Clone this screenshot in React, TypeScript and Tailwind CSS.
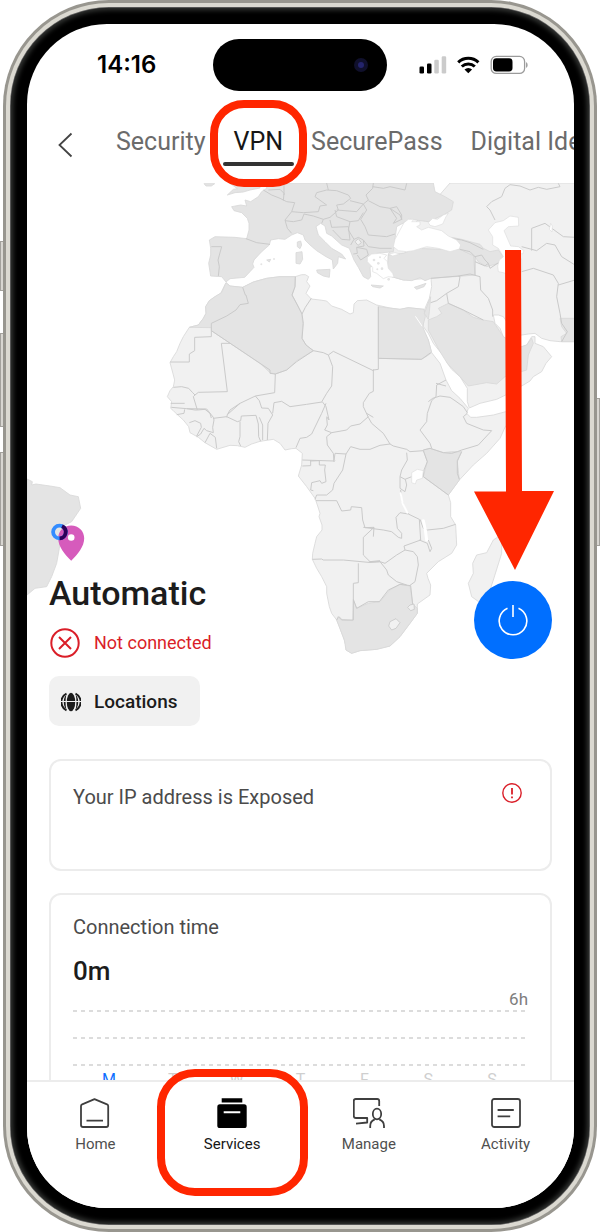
import React from "react";

const WORLD = {
  africa:
    "M228 308L240 318 278 322 310 306 350 295 390 290 436 290 455 284 466 284 476 290 470 305 480 318 468 340 484 357 510 360 530 363 545 378 575 388 600 402 610 398 612 372 622 362 650 360 680 375 720 384 750 388 775 383 822 388 826 410 820 440 815 440 806 425 795 408 815 440 835 480 845 518 870 550 888 600 905 632 930 655 955 685 950 700 962 712 980 712 1030 705 1067 695 1100 688 1092 710 1066 740 1050 775 1010 820 970 855 928 900 895 945 902 968 902 1010 917 1035 920 1095 905 1120 865 1145 830 1180 834 1195 842 1215 840 1245 802 1272 802 1300 780 1330 750 1370 720 1398 680 1408 655 1410 630 1412 605 1420 588 1410 587 1395 583 1380 570 1345 560 1320 545 1300 538 1280 530 1240 530 1220 515 1190 500 1165 487 1138 488 1120 495 1090 500 1070 516 1050 516 1035 507 1010 510 1000 502 975 495 955 470 920 445 888 455 855 457 820 438 805 425 806 405 810 390 790 370 778 330 784 305 792 285 802 262 797 240 796 200 808 165 788 145 772 120 758 116 740 100 720 80 702 70 692 62 685 65 665 52 650 60 632 70 620 74 600 66 570 60 548 70 530 80 515 90 490 100 470 118 442 145 435 160 415 168 400 167 380 178 362 195 350 212 340Z",
  asia:
    "M715 222L900 9 1275 9 1275 485 1230 485 1200 482 1175 475 1155 460 1135 462 1115 465 1095 465 1080 450 1070 425 1060 410 1045 405 1030 405 1035 430 1050 445 1060 470 1090 490 1115 500 1130 495 1145 470 1155 470 1155 490 1180 500 1205 530 1188 550 1175 575 1150 590 1140 603 1120 615 1067 645 1040 658 990 670 958 684 952 665 952 625 930 590 905 568 892 550 885 530 870 515 850 490 835 460 820 440 818 425 825 385 838 355 845 320 843 295 760 300 725 290 715 250Z",
  europe:
    "M350 9L850 9 855 35 885 50 910 65 905 90 880 105 835 125 780 118 740 140 730 215 680 220 672 235 680 265 668 258 660 262 662 290 655 298 640 290 625 262 612 240 598 205 575 195 545 168 530 160 525 138 512 130 498 140 505 165 525 185 545 205 575 222 587 237 565 230 563 250 550 267 547 240 528 230 500 212 480 195 465 180 460 165 442 158 425 165 405 178 385 176 362 180 358 195 335 215 312 240 308 252 312 262 300 275 284 292 240 296 228 306 215 290 182 288 176 250 182 225 182 205 178 180 195 170 255 172 290 176 297 150 297 130 292 115 275 98 252 92 245 80 272 75 290 78 285 60 302 65 325 50 335 35 350 25Z",
  turkey:
    "M715 225L760 220 800 205 870 208 930 208 970 225 975 285 940 288 843 295 825 302 810 293 785 302 760 300 725 290 712 265Z",
  caucasus:
    "M905 172L935 178 960 185 990 193 1000 205 1020 215 1045 210 1060 230 1045 250 1010 260 985 245 975 230 930 208Z",
};

const DARK = [
  "M228 308L240 318 278 322 310 306 350 295 390 290 436 290 435 320 426 345 440 370 455 400 458 430 456 475 468 495 490 512 440 542 410 570 375 582 360 578 330 550 184 452 184 443 118 442 145 435 160 415 168 400 167 380 178 362 195 350 215 338Z",
  "M685 380L750 388 775 383 822 388 826 410 818 440 835 480 845 518 828 530 812 538 685 535Z",
  "M842 350L838 395 835 418 823 400Z",
  "M835 420L860 410 875 400 865 385 895 370 940 390 970 412 1000 420 1030 425 1060 470 1090 490 1115 500 1130 495 1145 475 1150 490 1135 525 1130 570 1065 590 1040 612 1010 608 955 618 930 590 892 550 870 515 835 450Z",
  "M1230 415L1275 415 1275 485 1235 485 1233 470 1250 460 1235 440Z",
  "M820 810L840 805 880 818 905 815 935 815 922 845 928 900 895 945 820 890 832 845Z",
  "M560 1320L568 1310 575 1318 608 1322 610 1260 620 1285 655 1270 690 1265 720 1230 750 1213 780 1218 788 1272 802 1285 802 1300 780 1330 750 1370 720 1398 680 1408 630 1412 605 1420 588 1410 583 1380Z",
  "M-369 897L-353 905 -355 915 -342 912 -300 918 -270 923 -240 945 -215 950 -208 985 -235 1025 -265 1040 -272 1105 -280 1150 -295 1190 -310 1220 -345 1225 -369 1245Z",
  "M442 186L452 183 455 195 450 206 442 200ZM438 218L456 215 458 238 450 252 438 250ZM500 270L540 268 538 292 520 288 502 278ZM162 11L194 11 184 18 168 18ZM232 45L250 28 262 26 240 10 330 9 330 24 300 30 280 36 255 38ZM350 240L362 238 358 246ZM663 315L700 318 690 324 668 320ZM793 322L828 310 822 320 800 328Z",
];

const LIGHT = [
  "M1045 1070L1030 1080 1010 1118 980 1125 968 1150 970 1180 955 1210 965 1250 990 1268 1010 1260 1030 1200 1055 1120 1055 1085Z",
  "M615 185L625 176 634 188 624 196Z",
  "M780 1275L792 1272 793 1288 782 1292 773 1282ZM720 1325L738 1316 750 1328 738 1345 725 1350 716 1338Z",
];

const SEAS = [
  "M730 200L735 178 750 150 762 128 775 118 792 118 785 125 810 125 810 135 800 140 815 150 835 142 875 152 895 168 920 180 932 195 928 207 900 215 865 205 830 200 790 212 770 215 745 212Z",
  "M835 128L848 115 862 118 880 105 895 100 888 110 878 132 855 140 840 136Z",
  "M716 222L735 218 750 222 728 228Z",
  "M652 232L665 222 690 220 710 225 702 235 712 245 715 265 728 280 732 292 715 290 700 296 680 280 668 275 668 262 652 245Z",
  "M1015 150L1035 128 1060 122 1080 108 1105 112 1106 138 1075 140 1062 152 1075 182 1082 198 1105 200 1122 212 1118 222 1105 220 1115 240 1115 270 1080 285 1060 278 1045 275 1043 258 1048 240 1060 230 1045 205 1028 195 1028 170Z",
  "M785 878L802 868 820 872 817 895 800 900 796 912 785 908Z",
  "M1198 148L1202 130 1207 138 1206 156Z",
];

const BORDERS = [
  "M278 322L286 345 288 345 295 370 270 374 258 390 230 408 184 430 184 470 134 472 134 512 118 522 118 546 60 546",
  "M184 452L330 550 360 570 360 580 376 582 410 570 440 545 490 512 520 518 535 525 550 514 670 572 671 568",
  "M240 490L214 490 224 570 232 635 145 637 135 645 128 638 116 625 95 620 70 622",
  "M376 582L374 638 316 648 270 670 232 704 230 712M135 645L130 650 142 690 165 688 180 700 184 714",
  "M436 290L435 320 426 345 442 375 456 402 466 382 484 355M456 402L460 430 456 475 468 495 490 512",
  "M535 525L548 560 545 618 530 640 516 664 528 680 537 720 530 710",
  "M62 670L104 670M64 682L110 686 135 690 142 690M80 704L102 700 104 688",
  "M110 686L170 687 190 712 192 720 188 742 190 758 170 752 162 745 152 762 140 770M118 728L135 722 152 730 154 742 140 768M190 715L230 710 262 725 272 722 274 708 318 706M165 788L180 760 196 772 200 805M270 725L270 770 266 785 272 798M318 706L325 732 326 770 332 784M328 712L338 735 338 780M352 780L354 730 368 705 355 685 335 684 328 662 316 648",
  "M232 704L240 690 270 670M368 700L372 668 395 664 420 680 470 673 516 666M528 670L515 700 485 762 470 772 450 775 438 803",
  "M530 712L532 735 524 750 545 758 530 770 532 795 550 820 552 845 555 842",
  "M545 758L590 750 602 738 630 732 655 710M655 712L640 680 640 668 658 640 670 634 670 570 685 568 685 380",
  "M685 535L815 538 842 518M670 712L650 700M655 712L665 730 700 760 720 792M720 792L690 796 660 808 630 808 602 800 588 822 555 820 552 842M457 840L552 843",
  "M482 840L482 857 457 858M482 843L508 842 508 855 526 855 524 870 528 905 515 910 510 902 485 908 482 930 490 932M588 822L578 870 552 910 548 930 530 945 500 945 495 958",
  "M498 962L560 962 575 993 602 990 604 980 635 983 638 1020 645 1043 672 1042",
  "M672 1042L640 1072 640 1125 660 1145 690 1142M487 1138L515 1137 520 1140 580 1140 655 1147 690 1145M625 1150L625 1208 610 1210 610 1320 575 1320 565 1310 560 1320",
  "M888 600L860 615 858 650 845 662 832 700 830 725 810 750 840 790 845 805M888 618L858 610M835 665L848 655 870 648 900 652 915 662 940 680 952 698",
  "M720 792L730 798 770 808 780 815 820 812M952 700L940 710 950 730 1000 750 1025 752 985 795 935 810 922 815 905 820 880 818 840 805 820 810",
  "M935 815L922 842 922 880 928 898M820 812L832 845 822 870 820 890 895 945",
  "M770 818L772 840 755 870 750 890 765 898 785 890M750 890L750 925 765 935 770 915 766 898M752 930L755 960 765 985 775 1002",
  "M775 1002L750 998 738 1012 742 1045 755 1060 755 1075 745 1072 725 1055 700 1050 640 1042M672 1042L670 1070M775 1002L808 1018 812 1080 762 1098 765 1110 790 1115 802 1130 805 1155 795 1205 780 1216",
  "M810 1018L820 1045 832 1050 880 1045 917 1033M808 1080L832 1090 840 1115 845 1105 835 1080",
  "M655 1147L690 1145 705 1150 740 1125 765 1110M690 1145L710 1170 715 1185 740 1205 770 1215M610 1258L620 1285 655 1265 688 1265 715 1230 750 1213 782 1217 788 1272",
  "M843 295L925 288 930 290 925 320 890 340 860 362 842 368M890 340L895 370 940 390 1000 420M925 288L960 282 990 290 992 330 1015 355 1028 390 1028 410M975 230L975 285M975 245L1005 258 1015 250 1020 265 1050 245",
  "M1115 275L1150 265 1210 285 1225 310 1220 350 1230 400 1235 430 1252 455 1235 485M1225 315L1275 300M1115 200L1160 212 1190 190 1215 195 1235 230 1275 255M1145 212L1145 145 1185 130 1240 170 1275 172M1010 80L1025 65 1055 50 1065 25 1080 14 1110 18 1140 30 1165 22 1190 28 1230 20 1225 10M1010 80L1020 90 1035 120",
  "M184 200L215 200 204 240 208 260 205 288M288 176L320 188 360 193M340 30L365 45 390 55 410 65 434 68 425 95 405 120 412 145 425 160M355 30L390 28 402 40 400 62M402 9L402 45",
  "M425 95L460 98 505 95 510 78 530 75 495 50 500 38 530 30 560 32 595 45 602 55 580 72 560 75 565 90 540 112 520 118 515 130M405 122L430 125 455 120 462 102 490 108 520 118M560 90L620 95 640 72 600 62M530 9L535 30M555 90L560 110 600 125 625 122 640 98",
  "M640 72L655 60 648 45 668 25 670 9M655 62L690 80 720 85 740 115 730 130 755 118M720 85L750 105 755 118M720 85L740 80 755 105 755 120M640 72L650 90 632 118 645 140 655 165 710 170 735 162M640 180L655 200 690 205 725 205",
  "M545 142L595 140 600 180 575 178 548 150M545 142L540 120M600 125L595 150 612 178 602 195M612 178L625 172 640 180 642 198 620 202 622 220 610 222M620 202L650 208 655 225 632 240 622 225M668 20L700 25 720 20 765 30 770 10M905 175L935 180 960 188 1000 208M930 208L960 215 975 230 995 225 1005 240 1015 250",
];

function WorldMap() {
  return (
    <svg
      aria-hidden="true"
      viewBox="-369 9 1641 1500"
      preserveAspectRatio="xMidYMin slice"
      className="absolute inset-x-0 top-0 h-[500px] w-full"
    >
      <g strokeWidth="2.5" strokeLinejoin="round" stroke="#d9d9d9">
        <path d={WORLD.africa} fill="#f1f1f1" />
        <path d={WORLD.asia} fill="#f1f1f1" />
        {LIGHT.slice(0, 1).map((d) => (
          <path key={d} d={d} fill="#f1f1f1" />
        ))}
        <path d={WORLD.europe} fill="#e4e4e4" />
        <path d={WORLD.turkey} fill="#e4e4e4" />
        <path d={WORLD.caucasus} fill="#e4e4e4" />
        {DARK.map((d) => (
          <path key={d} d={d} fill="#e4e4e4" />
        ))}
        {LIGHT.slice(1).map((d) => (
          <path key={d} d={d} fill="#f1f1f1" stroke="#c8c8c8" />
        ))}
      </g>
      <g fill="none" stroke="#cacaca" strokeWidth="3" strokeLinejoin="round">
        {BORDERS.map((d) => (
          <path key={d} d={d} />
        ))}
      </g>
      <g fill="#fff" stroke="#dedede" strokeWidth="2">
        {SEAS.map((d) => (
          <path key={d} d={d} />
        ))}
      </g>
      <g fill="none" stroke="#fff" strokeLinecap="round">
        <path d="M752 940L758 970 772 998" strokeWidth="6" />
        <path d="M820 1022L826 1050 830 1080" strokeWidth="9" />
        <path d="M797 410L816 438" strokeWidth="3" />
      </g>
      <g fill="#e4e4e4">
        <circle cx="672" cy="240" r="4" />
        <circle cx="685" cy="250" r="4" />
        <circle cx="696" cy="266" r="4" />
        <circle cx="690" cy="232" r="3" />
        <circle cx="682" cy="268" r="3" />
        <circle cx="716" cy="298" r="4" />
        <circle cx="372" cy="237" r="3" />
        <circle cx="334" cy="253" r="3" />
      </g>
    </svg>
  );
}

function StatusIcons() {
  return (
    <svg aria-hidden="true" viewBox="0 0 110 20" className="h-5 w-[110px] shrink-0">
      <rect x="0.5" y="11.5" width="4.5" height="7" rx="1.3" />
      <rect x="8" y="8.5" width="4.5" height="10" rx="1.3" />
      <rect x="15.3" y="4.8" width="4.5" height="13.7" rx="1.3" fill="#cbcbcb" />
      <rect x="22.7" y="1.2" width="4.5" height="17.3" rx="1.3" fill="#cbcbcb" />
      <g fill="none" stroke="#000" strokeWidth="3">
        <path d="M39.2 7.4a14.6 14.6 0 0 1 20.2 0" />
        <path d="M42.8 11.5a9.4 9.4 0 0 1 13 0" />
      </g>
      <path d="M49.3 18.2l-3.8-3.7a5.4 5.4 0 0 1 7.6 0z" />
      <rect x="72.2" y="1.4" width="33.4" height="17" rx="5" fill="none" stroke="#9b9b9b" strokeWidth="1.3" />
      <rect x="74" y="3.3" width="19.5" height="13.2" rx="3.4" />
      <path d="M107.2 7v6q1.4-1 1.4-3t-1.4-3z" fill="#8c8c8c" />
    </svg>
  );
}

const iconLine = {
  fill: "none",
  stroke: "#3f3f3f",
  strokeWidth: 1.8,
  strokeLinejoin: "round" as const,
};

const NAV = [
  {
    label: "Home",
    icon: (
      <g {...iconLine}>
        <path d="M14.5 1.2L27 6.3q1.2.6 1.2 1.8V27q0 2-2 2H3q-2 0-2-2V8.1q0-1.2 1.2-1.8z" />
        <path d="M6.5 22.6H23" />
      </g>
    ),
  },
  {
    label: "Services",
    icon: (
      <g>
        <path d="M4.7.3h20.6v4.2H4.7z" />
        <rect x=".3" y="6.3" width="29.4" height="23.7" rx="2.6" />
        <path d="M6.7 14.3h16.6" stroke="#fff" strokeWidth="2" />
      </g>
    ),
  },
  {
    label: "Manage",
    icon: (
      <g {...iconLine}>
        <path d="M26.2 8V3q0-2-2-2H2.8q-2 0-2 2v15q0 2 2 2h11.4v4.5L3 25.6" />
        <ellipse cx="24" cy="16" rx="4.2" ry="5.3" />
        <path d="M17.2 30v-2q0-5 4.6-6.6M26.2 21.4q4.8 1.6 4.8 6.6v2" />
      </g>
    ),
  },
  {
    label: "Activity",
    icon: (
      <g {...iconLine}>
        <rect x="1" y="1" width="28" height="28" rx="2.2" />
        <path d="M6.6 12h16.2M6.6 18.3h12.6" />
      </g>
    ),
  },
];

const SIDE = "absolute w-1 border border-[#a3a19c] bg-[#d8d6d1]";

export default function App() {
  return (
    <div className="bg-white px-[3px] font-[Roboto,sans-serif]">
      <div className="relative">
        <span className={`${SIDE} -left-[3px] top-[241px] h-[50px]`} />
        <span className={`${SIDE} -left-[3px] top-[333px] h-[94px]`} />
        <span className={`${SIDE} -left-[3px] top-[452px] h-[94px]`} />
        <span className={`${SIDE} -right-[3px] top-[398px] h-[148px]`} />
        <div className="relative rounded-[106px] bg-[#98968f] p-[3px]">
          <div className="rounded-[103px] bg-[#dbd9d1] p-1">
            <div className="rounded-[99px] bg-[#555] p-px">
              <div className="rounded-[98px] bg-black py-4 pr-[15px] pl-4 shadow-[inset_0_0_5px_2px_#363836]">
                <div className="overflow-hidden rounded-[80px] bg-white">
                  <header>
                    <div className="flex h-[82px] items-center pr-[45px] pl-[70px]">
                      <span className="w-[116px] shrink-0 font-[Inter,sans-serif] text-2xl font-semibold text-black">
                        14:16
                      </span>
                      <div className="flex h-[52px] w-[174px] shrink-0 items-center justify-end rounded-full bg-black pr-[19px]">
                        <span className="flex size-3.5 items-center justify-center rounded-full bg-[#10102c]">
                          <span className="size-1.5 rounded-full bg-[#24246c]" />
                        </span>
                      </div>
                      <div className="ml-auto">
                        <StatusIcons />
                      </div>
                    </div>
                    <nav className="flex h-[77px] pt-4 whitespace-nowrap">
                      <button aria-label="Back" className="mr-[43px] ml-[30px] h-[46px] w-4 shrink-0">
                        <svg viewBox="0 0 16 26" className="h-[26px] w-4" fill="none" stroke="#444" strokeWidth="1.8">
                          <path d="M14.5 1.5L2.5 13l12 11.5" />
                        </svg>
                      </button>
                      <div className="flex h-10 shrink-0 items-center gap-7 text-[25px] leading-10 text-[#6b6b6b]">
                        <a href="#security">Security</a>
                        <a href="#vpn" aria-current="page" className="relative text-[#161616]">
                          VPN
                          <span className="absolute -inset-x-[11px] -bottom-1 h-1 rounded-full bg-[#333]" />
                          <span className="pointer-events-none absolute -inset-x-6 -top-[22px] z-20 h-[87px] rounded-[34px] border-8 border-[#ff2600]" />
                        </a>
                        <a href="#securepass">SecurePass</a>
                        <a href="#identity">Digital Identity</a>
                      </div>
                    </nav>
                  </header>

                  <main className="h-[897px] overflow-hidden">
                    <section className="relative px-[22px] pt-[338px]">
                      <WorldMap />
                      <svg aria-hidden="true" viewBox="0 0 36 42" className="relative h-[42px] w-9">
                        <path
                          d="M22.2 4.5c-7.5 0-13 5.5-13 12.8 0 8.4 6.5 16 13 22.5 6.5-6.5 13-14.1 13-22.5 0-7.3-5.5-12.8-13-12.8z"
                          fill="#d65bbc"
                        />
                        <circle cx="22.2" cy="16.5" r="3.3" fill="#fff" />
                        <circle cx="10.5" cy="11" r="6.4" fill="none" stroke="#338cff" strokeWidth="3.8" />
                        <path d="M13 5.2a6.4 6.4 0 0 1-2.4 12.2" fill="none" stroke="#2d0057" strokeWidth="3.8" />
                      </svg>
                      <div className="relative flex items-start justify-between">
                        <div>
                          <h1 className="mt-2 h-[48px] text-[34px] leading-[44px] font-medium text-[#1c1c1c]">
                            Automatic
                          </h1>
                          <p className="mt-[9px] flex h-[30px] items-center gap-3.5 pl-px text-lg text-[#da1e28]">
                            <svg aria-hidden="true" viewBox="0 0 30 30" className="size-[30px]" fill="none" stroke="#da1e28" strokeWidth="2">
                              <circle cx="15" cy="15" r="13.7" />
                              <path d="M9 9l12 12M21 9L9 21" />
                            </svg>
                            Not connected
                          </p>
                          <button className="mt-[18px] flex h-[50px] w-[151px] items-center gap-[13px] rounded-[10px] bg-[#f1f1f1] pt-0.5 pl-3 text-[19px] font-medium text-[#1c1c1c]">
                            <svg aria-hidden="true" viewBox="0 0 20 20" className="size-5">
                              <g fill="none" stroke="#1c1c1c" strokeWidth="2">
                                <path d="M5.5 1.7a9.3 9.3 0 0 0 0 16.6M14.5 1.7a9.3 9.3 0 0 1 0 16.6" />
                              </g>
                              <ellipse cx="10" cy="10" rx="4.2" ry="9.3" fill="#1c1c1c" />
                              <path
                                d="M5.3 2.8C3.5 4.6 2.8 7 2.8 10s.7 5.4 2.5 7.2C4.3 13 4.3 7 5.3 2.8zM14.7 2.8c1.8 1.8 2.5 4.2 2.5 7.2s-.7 5.4-2.5 7.2c1-4.2 1-10.2 0-14.4z"
                                fill="#1c1c1c"
                              />
                              <path d="M0 9.5h20" stroke="#f1f1f1" strokeWidth="1" />
                            </svg>
                            Locations
                          </button>
                        </div>
                        <div className="relative mt-[18px]">
                          <svg
                            aria-hidden="true"
                            viewBox="0 0 80 320"
                            className="pointer-events-none absolute bottom-[89px] left-0 h-[320px] w-20"
                          >
                            <path d="M31 0h16l1 241h32L41 320 0 241.5h32z" fill="#ff2600" />
                          </svg>
                          <button aria-label="Turn VPN on" className="flex size-[78px] items-center justify-center rounded-full bg-[#006fff]">
                            <svg viewBox="0 0 30 32" className="h-8 w-[30px]" fill="none" stroke="#fff" strokeWidth="1.6">
                              <path d="M9.5 4.3a13.8 13.8 0 1 0 11 0M15 1v12" />
                            </svg>
                          </button>
                        </div>
                      </div>
                    </section>

                    <section className="mx-[22px] mt-[33px] flex h-28 items-start justify-between rounded-xl border-2 border-[#ececec] bg-white px-[22px] pt-[22px] text-xl leading-7 text-[#4b4b4b]">
                      <p>Your IP address is Exposed</p>
                      <svg aria-hidden="true" viewBox="0 0 20 20" className="mr-1.5 size-5 shrink-0" fill="none" stroke="#da1e28" strokeWidth="1.4">
                        <circle cx="10" cy="10" r="9.2" />
                        <path d="M10 5v6.5M10 13.5v1.8" strokeWidth="1.8" />
                      </svg>
                    </section>

                    <section className="relative mx-[22px] mt-[22px] h-[240px] rounded-xl border-2 border-[#ececec] bg-white px-[22px] pt-[18px] text-[#4b4b4b]">
                      <h2 className="text-xl leading-7">Connection time</h2>
                      <p className="mt-3 text-[26px] leading-9 font-medium text-[#1c1c1c]">0m</p>
                      <p className="text-right text-[17px] leading-5 text-[#7d7d7d]">6h</p>
                      <div className="mt-px flex flex-col gap-[25px]">
                        {[0, 1, 2].map((n) => (
                          <div
                            key={n}
                            className="h-0.5 bg-[repeating-linear-gradient(90deg,#dcdcdc_0_4px,transparent_4px_8px)]"
                          />
                        ))}
                      </div>
                      <div className="mt-0.5 grid grid-cols-7 px-1 text-center text-base leading-6 text-[#cfcfcf]">
                        {["M", "T", "W", "T", "F", "S", "S"].map((day, n) => (
                          <span key={n} className={n === 0 ? "text-[#0f6fff]" : ""}>
                            {day}
                          </span>
                        ))}
                      </div>
                    </section>
                  </main>

                  <footer className="relative grid h-32 grid-cols-4 border-t-2 border-[#ececec] bg-white">
                    {NAV.map(({ label, icon }) => (
                      <a
                        key={label}
                        href={`#${label.toLowerCase()}`}
                        className={`relative flex flex-col items-center pt-4 text-[15px] ${
                          label === "Services" ? "text-[#161616]" : "text-[#4f4f4f]"
                        }`}
                      >
                        <svg aria-hidden="true" viewBox="0 0 32 31" className="h-[31px] w-8">
                          <g transform={label === "Manage" ? undefined : "translate(1)"}>{icon}</g>
                        </svg>
                        <span className="mt-[5px] leading-5">{label}</span>
                        {label === "Services" && (
                          <span className="pointer-events-none absolute -inset-x-[7px] -top-[13px] z-20 h-[127px] rounded-[38px] border-8 border-[#ff2600]" />
                        )}
                      </a>
                    ))}
                  </footer>
                </div>
              </div>
            </div>
          </div>
        </div>
      </div>
    </div>
  );
}
